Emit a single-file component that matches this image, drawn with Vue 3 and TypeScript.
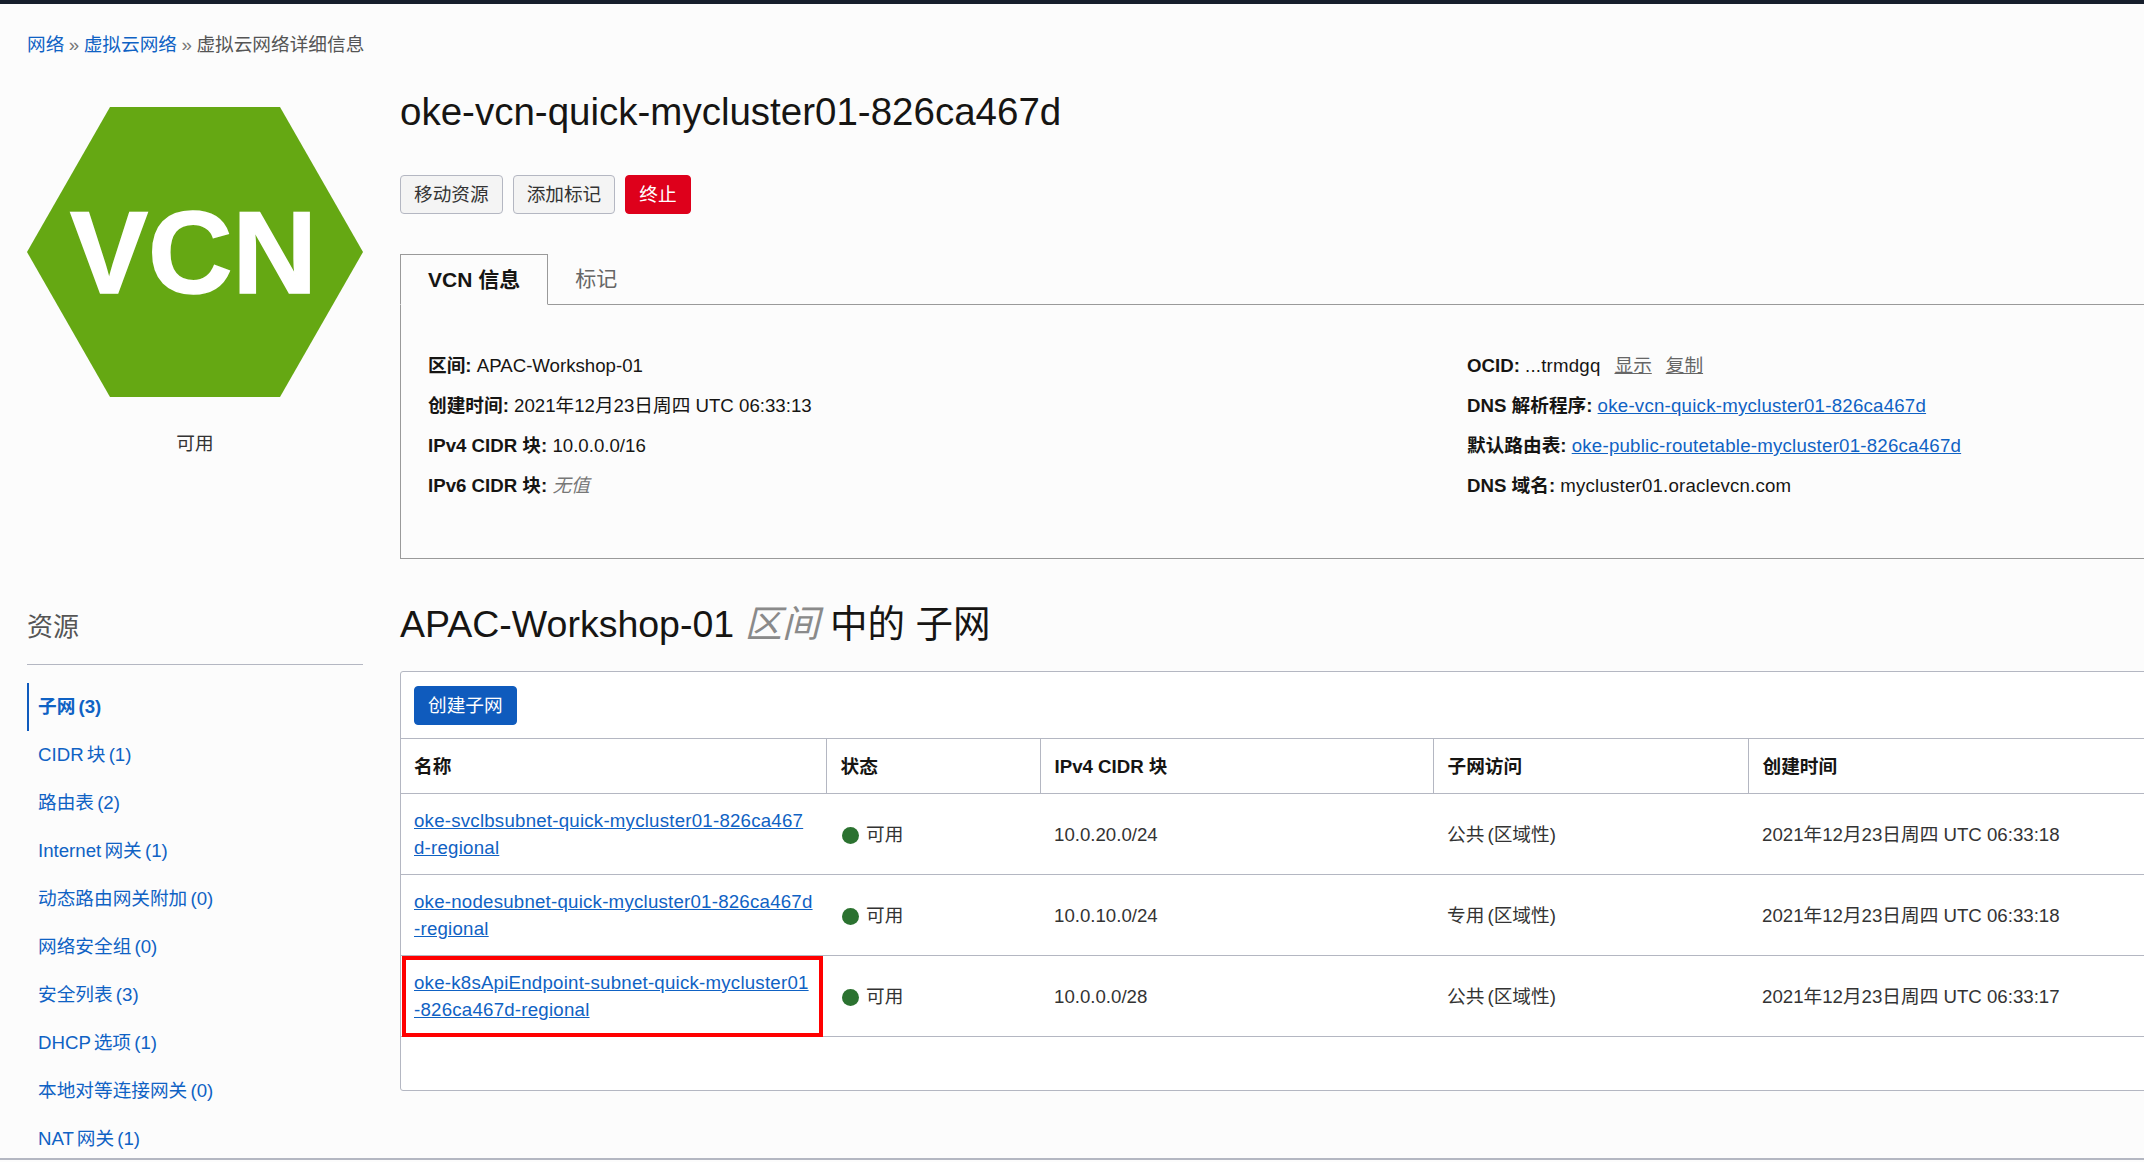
<script setup lang="ts">
const navItems = [
  "CIDR 块 (1)",
  "路由表 (2)",
  "Internet 网关 (1)",
  "动态路由网关附加 (0)",
  "网络安全组 (0)",
  "安全列表 (3)",
  "DHCP 选项 (1)",
  "本地对等连接网关 (0)",
  "NAT 网关 (1)",
];

const subnets = [
  {
    name: "oke-svclbsubnet-quick-mycluster01-826ca467d-regional",
    cidr: "10.0.20.0/24",
    access: "公共 (区域性)",
    created: "2021年12月23日周四 UTC 06:33:18",
    marked: false,
  },
  {
    name: "oke-nodesubnet-quick-mycluster01-826ca467d-regional",
    cidr: "10.0.10.0/24",
    access: "专用 (区域性)",
    created: "2021年12月23日周四 UTC 06:33:18",
    marked: false,
  },
  {
    name: "oke-k8sApiEndpoint-subnet-quick-mycluster01-826ca467d-regional",
    cidr: "10.0.0.0/28",
    access: "公共 (区域性)",
    created: "2021年12月23日周四 UTC 06:33:17",
    marked: true,
  },
];
</script>

<template>
  <div class="page">
    <nav class="crumbs">
      <a>网络</a><span class="sep">»</span><a>虚拟云网络</a><span class="sep">»</span><span>虚拟云网络详细信息</span>
    </nav>

    <div class="layout">
      <aside class="side">
        <div class="hex">
          <svg viewBox="0 0 336 290" width="336" height="290">
            <polygon points="83,0 253,0 336,145 253,290 83,290 0,145" fill="#65a813" />
            <text x="166.5" y="186" text-anchor="middle" class="hex-text">VCN</text>
          </svg>
        </div>
        <div class="hex-state">可用</div>

        <h3 class="res-title">资源</h3>
        <ul class="res-list">
          <li class="res-item active"><a>子网 (3)</a></li>
          <li v-for="item in navItems" :key="item" class="res-item">
            <a>{{ item }}</a>
          </li>
        </ul>
      </aside>

      <main class="main">
        <h1 class="title">oke-vcn-quick-mycluster01-826ca467d</h1>
        <div class="actions">
          <button class="btn">移动资源</button>
          <button class="btn">添加标记</button>
          <button class="btn danger">终止</button>
        </div>

        <div class="tabs">
          <div class="tab active">VCN 信息</div>
          <div class="tab">标记</div>
        </div>
        <div class="info">
          <div class="info-col">
            <p><b>区间:</b> APAC-Workshop-01</p>
            <p><b>创建时间:</b> 2021年12月23日周四 UTC 06:33:13</p>
            <p><b>IPv4 CIDR 块:</b> 10.0.0.0/16</p>
            <p><b>IPv6 CIDR 块:</b> <i class="none">无值</i></p>
          </div>
          <div class="info-col">
            <p>
              <b>OCID:</b> <span class="val">...trmdgq</span>
              <a class="muted first">显示</a>
              <a class="muted">复制</a>
            </p>
            <p><b>DNS 解析程序:</b> <a class="link">oke-vcn-quick-mycluster01-826ca467d</a></p>
            <p><b>默认路由表:</b> <a class="link">oke-public-routetable-mycluster01-826ca467d</a></p>
            <p><b>DNS 域名:</b> <span class="val">mycluster01.oraclevcn.com</span></p>
          </div>
        </div>

        <h2 class="section">APAC-Workshop-01 <i class="scope">区间</i> 中的 子网</h2>

        <div class="card">
          <div class="toolbar">
            <button class="btn primary">创建子网</button>
          </div>
          <table class="grid">
            <colgroup>
              <col class="c1" />
              <col class="c2" />
              <col class="c3" />
              <col class="c4" />
              <col />
            </colgroup>
            <thead>
              <tr>
                <th>名称</th>
                <th>状态</th>
                <th>IPv4 CIDR 块</th>
                <th>子网访问</th>
                <th>创建时间</th>
              </tr>
            </thead>
            <tbody>
              <tr v-for="row in subnets" :key="row.name">
                <td class="name-cell">
                  <a class="link">{{ row.name }}</a>
                  <span v-if="row.marked" class="mark"></span>
                </td>
                <td>
                  <span class="dot"></span><span>可用</span>
                </td>
                <td>{{ row.cidr }}</td>
                <td class="access">{{ row.access }}</td>
                <td>{{ row.created }}</td>
              </tr>
            </tbody>
          </table>
        </div>
      </main>
    </div>
  </div>
</template>

<style>
html,
body {
  margin: 0;
  background: #fcfcfc;
}
</style>

<style scoped>
.page {
  height: 1160px;
  overflow: hidden;
  box-sizing: border-box;
  border-top: 4px solid #161f2c;
  border-bottom: 2px solid #b4b7c2;
  background: #fcfcfc;
  color: #161513;
  font-family: "Liberation Sans", "Noto Sans CJK SC", sans-serif;
  font-size: 18.67px;
  line-height: 27px;
}
.crumbs {
  padding: 27px 27px 0;
  color: #555;
}
.crumbs a {
  color: #0f62c4;
}
.sep {
  margin: 0 4.5px;
  color: #777;
}
.layout {
  display: flex;
  gap: 37px;
  padding: 30px 0 0 27px;
}
.side {
  flex: 0 0 336px;
}
.hex {
  margin-top: 19px;
  height: 290px;
}
.hex svg {
  display: block;
}
.hex-text {
  fill: #fff;
  stroke: #fff;
  stroke-width: 1.5px;
  font-family: "Liberation Sans", sans-serif;
  font-size: 117px;
  font-weight: 700;
}
.hex-state {
  margin-top: 33px;
  text-align: center;
  color: #333;
}
.res-title {
  margin: 152px 0 0;
  padding-bottom: 19px;
  border-bottom: 1px solid #b4b7c2;
  font-size: 26px;
  font-weight: 400;
  line-height: 36px;
  color: #555;
}
.res-list {
  list-style: none;
  margin: 18px 0 0;
  padding: 0;
}
.res-item {
  height: 48px;
  line-height: 48px;
  padding-left: 9px;
  border-left: 2px solid transparent;
  color: #0f62c4;
  word-spacing: -2px;
}
.res-item.active {
  border-left-color: #0f5bbd;
  font-weight: 700;
}
.main {
  flex: 1;
  min-width: 0;
  margin-right: -40px;
}
.title {
  margin: 0;
  font-size: 38.5px;
  font-weight: 400;
  line-height: 48px;
}
.actions {
  display: flex;
  gap: 10px;
  margin-top: 39px;
}
.btn {
  height: 39px;
  padding: 0 13px;
  border: 1px solid #b4b7c2;
  border-radius: 4px;
  background: #f4f4f4;
  color: #333;
  font: inherit;
}
.btn.danger {
  border-color: #de001b;
  background: #de001b;
  color: #fff;
}
.btn.primary {
  display: block;
  border-color: #0f5bbd;
  background: #0f5bbd;
  color: #fff;
}
.tabs {
  display: flex;
  margin-top: 40px;
  height: 50px;
}
.tab {
  box-sizing: border-box;
  padding: 0 27px;
  height: 51px;
  line-height: 50px;
  font-size: 21px;
  color: #666;
  border-bottom: 1px solid #9a9a9a;
}
.tab.active {
  border: 1px solid #9a9a9a;
  border-bottom: 1px solid #fcfcfc;
  font-weight: 700;
  color: #161513;
  position: relative;
  z-index: 1;
}
.tab:last-child {
  flex: 1;
}
.info {
  display: flex;
  height: 255px;
  box-sizing: border-box;
  padding: 42px 27px 0;
  border: 1px solid #9a9a9a;
  border-top: 0;
}
.info-col {
  flex: 0 0 1039px;
}
.info-col p {
  margin: 0;
  height: 40px;
  line-height: 40px;
}
.none {
  color: #777;
}
.val {
  letter-spacing: 0.2px;
}
.muted {
  color: #666;
  text-decoration: underline;
  margin-left: 14px;
}
.link {
  color: #0f62c4;
  text-decoration: underline;
  letter-spacing: 0.23px;
}
.section {
  margin: 41px 0 0;
  font-size: 37.5px;
  font-weight: 400;
  line-height: 48px;
}
.scope {
  color: #8a8a8a;
}
.card {
  margin-top: 23px;
  height: 420px;
  box-sizing: border-box;
  border: 1px solid #b4b7c2;
  border-radius: 3px;
  background: #fff;
}
.toolbar {
  padding: 14px 13px 13px;
}
.grid {
  width: 100%;
  table-layout: fixed;
  border-collapse: collapse;
}
.c1 {
  width: 425px;
}
.c2 {
  width: 214px;
}
.c3 {
  width: 393px;
}
.c4 {
  width: 315px;
}
th,
td {
  box-sizing: border-box;
  padding: 0 14px;
  text-align: left;
  border-top: 1px solid #b4b7c2;
  border-bottom: 1px solid #b4b7c2;
}
th:first-child,
td:first-child {
  padding-left: 13px;
  padding-right: 12.6px;
}
th {
  height: 55px;
  font-weight: 700;
  border-left: 1px solid #b4b7c2;
}
th:first-child {
  border-left: 0;
}
td {
  height: 81px;
  color: #333;
}
.access {
  word-spacing: -2px;
}
.name-cell {
  position: relative;
  word-break: break-all;
}
.mark {
  position: absolute;
  left: 1px;
  top: 0;
  width: 421px;
  height: 81px;
  box-sizing: border-box;
  border: 4px solid #f00;
}
.dot {
  display: inline-block;
  width: 17px;
  height: 17px;
  margin: 0 7px 0 2px;
  border-radius: 50%;
  background: #2b7230;
  vertical-align: -3px;
}
</style>
